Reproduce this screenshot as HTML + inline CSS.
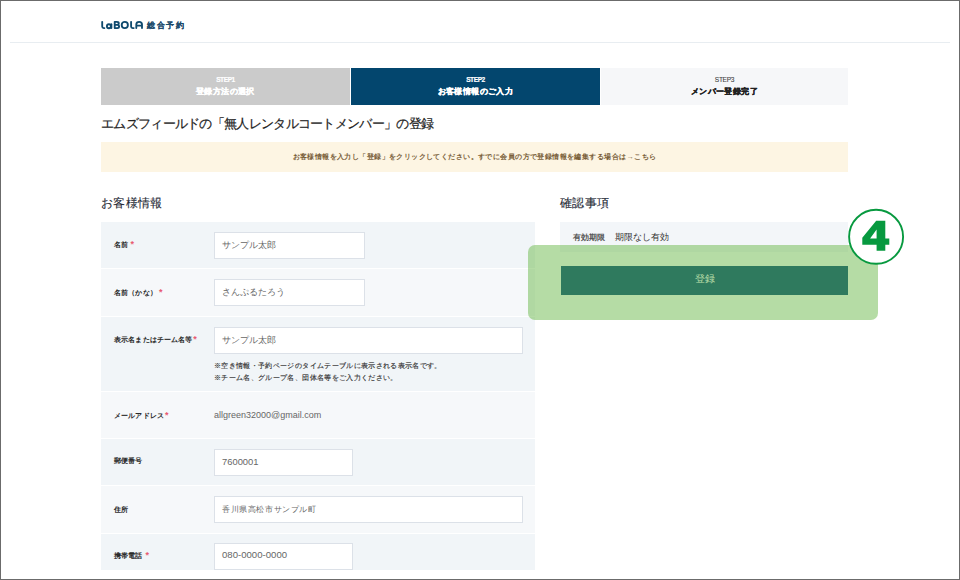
<!DOCTYPE html>
<html><head><meta charset="utf-8">
<style>
*{margin:0;padding:0;box-sizing:border-box}
html,body{width:960px;height:580px;overflow:hidden;background:#fff}
body{font-family:"Liberation Sans",sans-serif;color:#222;position:relative}
.frame{position:absolute;left:0;top:0;width:960px;height:580px;border:1px solid #6b6b6b;z-index:50;pointer-events:none}
.abs{position:absolute;white-space:nowrap}
.b{-webkit-text-stroke:0.25px currentColor}
.logo{left:100px;top:20px}
.jp{left:147px;top:20px;font-size:8.2px;font-weight:bold;color:#1b4a6b;letter-spacing:1.6px;-webkit-text-stroke:0.1px #1b4a6b}
.hline{left:10px;top:42px;width:940px;height:1px;background:#e8edf1}
.step{top:68px;height:37px;text-align:center}
.step .s{font-size:6.6px;font-weight:bold;padding-top:9px;line-height:6px;letter-spacing:-0.45px;-webkit-text-stroke:0.2px currentColor}
.step .t{font-size:8.2px;letter-spacing:0.4px;font-weight:bold;line-height:12px;margin-top:3px;-webkit-text-stroke:0.3px currentColor}
.s1{left:101px;width:249px;background:#cbcbcb;color:#fff}
.s2{left:351px;width:249px;background:#03466e;color:#fff}
.s3{left:601px;width:247px;background:#f6f7f9;color:#222}
.s3 .s{font-weight:normal;-webkit-text-stroke:0.1px #444;color:#444;letter-spacing:-0.3px}
.title{left:101px;top:115.5px;font-size:13px;color:#222;line-height:16px;letter-spacing:-0.7px;-webkit-text-stroke:0.2px #222}
.notice{left:101px;top:142px;width:747px;height:30px;background:#fdf5e3;font-size:7.4px;font-weight:bold;color:#7a5f3a;text-align:center;line-height:29px;letter-spacing:0.42px}
.h2{font-size:12.3px;letter-spacing:0.35px;color:#1f2a36;line-height:16px;-webkit-text-stroke:0.12px #1f2a36}
.row{position:absolute;left:101px;width:434px;background:#f1f5f8}
.row.e{background:#f6f8fa}
.lab{position:absolute;left:13px;font-size:7.4px;letter-spacing:0.15px;font-weight:bold;color:#2a2a2a;line-height:10px}
.req{color:#e85a70;font-size:9px;margin-left:2.2px;-webkit-text-stroke:0}
.inp{position:absolute;left:113px;background:#fff;border:1px solid #dce1e8;font-size:8.7px;color:#666;padding-left:7px;height:27px;line-height:25px}
.note{position:absolute;left:113px;font-size:7.2px;letter-spacing:0.35px;color:#333;line-height:11.5px;-webkit-text-stroke:0.15px #333}
.conf{left:560px;top:222px;width:288px;height:30px;background:#f3f6f9}
.btn{left:561px;top:266px;width:287px;height:29px;background:#02477a;color:#fff;font-size:10px;text-align:center;line-height:26px}
.overlay{left:528px;top:245px;width:350px;height:75px;border-radius:7px;background:rgba(98,181,64,0.47)}
</style></head><body>
<div class="frame"></div>
<svg class="abs logo" width="46" height="12" viewBox="0 0 46 12" fill="none" stroke="#0f4a6e" stroke-width="1.85" stroke-linecap="round" stroke-linejoin="round">
  <path d="M2.2,1.8 V6.6 Q2.2,8.1 3.8,8.1 H4.4"/>
  <circle cx="8.9" cy="6.2" r="2.0"/>
  <path d="M11.4,4.2 V8.1"/>
  <path d="M14.7,1.8 V8.1 H17.3 Q19.1,8.1 19.1,6.5 Q19.1,4.9 17.2,4.9 H14.7 M14.7,1.8 H16.9 Q18.8,1.8 18.8,3.3 Q18.8,4.9 16.9,4.9"/>
  <circle cx="24.8" cy="4.95" r="3.1"/>
  <path d="M31.1,1.8 V6.6 Q31.1,8.1 32.7,8.1 H33.7"/>
  <path d="M36.3,8.1 V4.6 Q36.3,1.8 39.15,1.8 Q42,1.8 42,4.6 V8.1 M36.3,5.6 H42"/>
</svg>
<div class="abs jp">総合予約</div>
<div class="abs hline"></div>

<div class="abs step s1"><div class="s">STEP1</div><div class="t">登録方法の選択</div></div>
<div class="abs step s2"><div class="s">STEP2</div><div class="t">お客様情報のご入力</div></div>
<div class="abs step s3"><div class="s">STEP3</div><div class="t">メンバー登録完了</div></div>

<div class="abs title">エムズフィールドの「無人レンタルコートメンバー」の登録</div>
<div class="abs notice">お客様情報を入力し「登録」をクリックしてください。すでに会員の方で登録情報を編集する場合は→こちら</div>

<div class="abs h2" style="left:101px;top:195px">お客様情報</div>
<div class="abs h2" style="left:560px;top:195px">確認事項</div>

<div class="row" style="top:222px;height:46px"><div class="lab" style="top:16.5px">名前<span class="req">*</span></div><div class="inp" style="top:10px;width:151px">サンプル太郎</div></div>
<div class="row e" style="top:269px;height:47px"><div class="lab" style="top:18px">名前（かな）<span class="req">*</span></div><div class="inp" style="top:10px;width:151px">さんぷるたろう</div></div>
<div class="row" style="top:317px;height:74px"><div class="lab" style="top:16.5px">表示名またはチーム名等<span class="req" style="margin-left:0.5px">*</span></div><div class="inp" style="top:10px;width:309px">サンプル太郎</div><div class="note" style="top:43px">※空き情報・予約ページのタイムテーブルに表示される表示名です。<br>※チーム名、グループ名、団体名等をご入力ください。</div></div>
<div class="row e" style="top:392px;height:46px"><div class="lab" style="top:18px">メールアドレス<span class="req" style="margin-left:1px">*</span></div><div class="abs" style="left:113px;top:18px;font-size:9px;color:#666">allgreen32000@gmail.com</div></div>
<div class="row" style="top:439px;height:46px"><div class="lab" style="top:17px">郵便番号</div><div class="inp" style="top:10px;width:139px;font-size:9.4px;line-height:23px">7600001</div></div>
<div class="row e" style="top:486px;height:47px"><div class="lab" style="top:19px">住所</div><div class="inp" style="top:10px;width:309px;font-size:8.4px;letter-spacing:0.6px">香川県高松市サンプル町</div></div>
<div class="row" style="top:534px;height:36px"><div class="lab" style="top:16px">携帯電話<span class="req" style="margin-left:3px">*</span></div><div class="inp" style="top:9px;width:139px;font-size:9.6px;line-height:21px">080-0000-0000</div></div>

<div class="abs conf"><span class="abs" style="left:12.5px;top:11px;font-size:7.5px;font-weight:bold;color:#555">有効期限</span><span class="abs" style="left:55px;top:10px;font-size:8.6px;color:#333">期限なし有効</span></div>
<div class="abs btn">登録</div>
<div class="abs overlay"></div>
<svg class="abs" style="left:840px;top:200px" width="75" height="70" viewBox="0 0 75 70">
  <circle cx="36.1" cy="36.8" r="27" fill="#fff" stroke="#07993f" stroke-width="1.9"/>
  <path fill="#07993f" fill-rule="evenodd" d="M36.2,20.8 H45.3 V38.6 H49.3 V44.7 H45.3 V50.7 H36.6 V44.7 H22.3 V37.8 Z M36.6,29.4 L30.1,38.6 H36.6 Z"/>
</svg>
</body></html>
